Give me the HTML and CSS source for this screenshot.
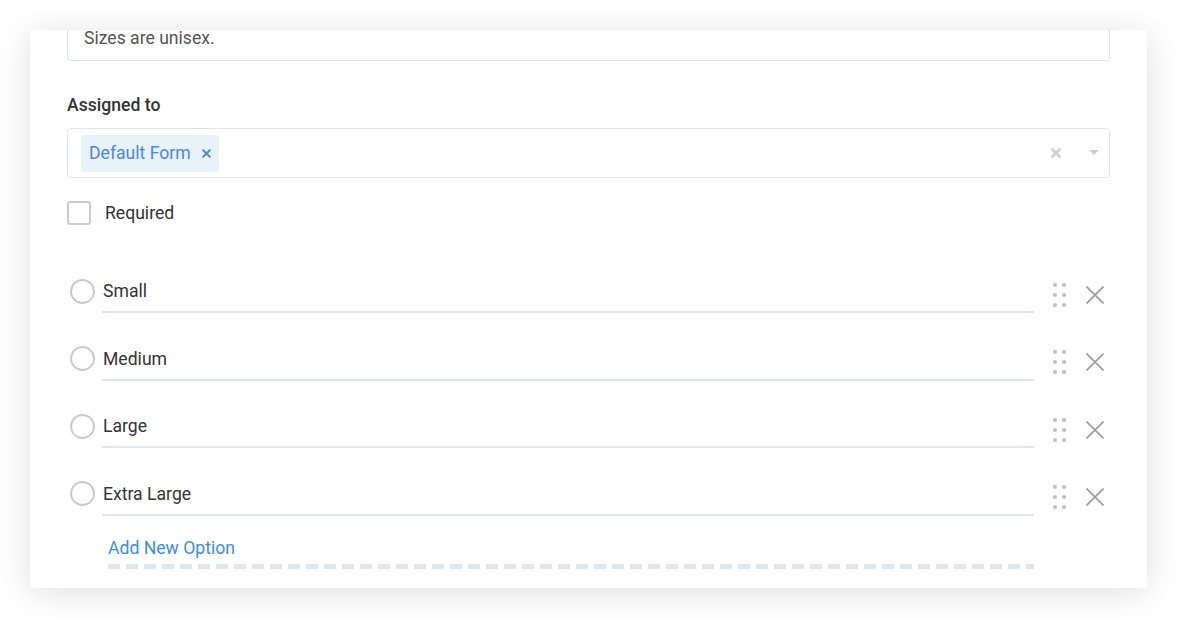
FILE: index.html
```html
<!DOCTYPE html>
<html lang="en">
<head>
<meta charset="utf-8">
<title>Field options</title>
<link rel="stylesheet" href="styles.css">
</head>
<body>
<div class="page">
  <div class="card">
    <div class="card-inner">
      <div class="textarea">Sizes are unisex.</div>

      <div class="label">Assigned to</div>
      <div class="select">
        <span class="tag">Default Form
          <svg class="tag-x" width="9" height="9" viewBox="0 0 9 9"><path d="M1.2 1.2 L7.8 7.8 M7.8 1.2 L1.2 7.8" stroke="#4a89dc" stroke-width="2" stroke-linecap="round"/></svg>
        </span>
        <span class="spacer"></span>
        <svg class="clear" width="12" height="12" viewBox="0 0 12 12"><path d="M1.5 1.5 L10.5 10.5 M10.5 1.5 L1.5 10.5" stroke="#cfcfcf" stroke-width="2.6"/></svg>
        <svg class="caret" width="10" height="5" viewBox="0 0 10 5"><path d="M0 0 H10 L5 5 Z" fill="#cfcfcf"/></svg>
      </div>

      <div class="check-row">
        <span class="checkbox"></span>
        <span class="check-label">Required</span>
      </div>

      <div class="options">
        <div class="option">
          <span class="radio"></span>
          <div class="opt-input">Small</div>
          <div class="opt-tools">
            <svg class="handle" width="14" height="24" viewBox="0 0 14 24"><circle cx="3" cy="2" r="2.1"/><circle cx="12" cy="2" r="2.1"/><circle cx="3" cy="12" r="2.1"/><circle cx="12" cy="12" r="2.1"/><circle cx="3" cy="22" r="2.1"/><circle cx="12" cy="22" r="2.1"/></svg>
            <svg class="remove" width="18" height="18" viewBox="0 0 18 18"><path d="M0.5 0.5 L17.5 17.5 M17.5 0.5 L0.5 17.5" stroke="#9a9a9a" stroke-width="1.6"/></svg>
          </div>
        </div>
        <div class="option">
          <span class="radio"></span>
          <div class="opt-input">Medium</div>
          <div class="opt-tools">
            <svg class="handle" width="14" height="24" viewBox="0 0 14 24"><circle cx="3" cy="2" r="2.1"/><circle cx="12" cy="2" r="2.1"/><circle cx="3" cy="12" r="2.1"/><circle cx="12" cy="12" r="2.1"/><circle cx="3" cy="22" r="2.1"/><circle cx="12" cy="22" r="2.1"/></svg>
            <svg class="remove" width="18" height="18" viewBox="0 0 18 18"><path d="M0.5 0.5 L17.5 17.5 M17.5 0.5 L0.5 17.5" stroke="#9a9a9a" stroke-width="1.6"/></svg>
          </div>
        </div>
        <div class="option">
          <span class="radio"></span>
          <div class="opt-input">Large</div>
          <div class="opt-tools">
            <svg class="handle" width="14" height="24" viewBox="0 0 14 24"><circle cx="3" cy="2" r="2.1"/><circle cx="12" cy="2" r="2.1"/><circle cx="3" cy="12" r="2.1"/><circle cx="12" cy="12" r="2.1"/><circle cx="3" cy="22" r="2.1"/><circle cx="12" cy="22" r="2.1"/></svg>
            <svg class="remove" width="18" height="18" viewBox="0 0 18 18"><path d="M0.5 0.5 L17.5 17.5 M17.5 0.5 L0.5 17.5" stroke="#9a9a9a" stroke-width="1.6"/></svg>
          </div>
        </div>
        <div class="option">
          <span class="radio"></span>
          <div class="opt-input">Extra Large</div>
          <div class="opt-tools">
            <svg class="handle" width="14" height="24" viewBox="0 0 14 24"><circle cx="3" cy="2" r="2.1"/><circle cx="12" cy="2" r="2.1"/><circle cx="3" cy="12" r="2.1"/><circle cx="12" cy="12" r="2.1"/><circle cx="3" cy="22" r="2.1"/><circle cx="12" cy="22" r="2.1"/></svg>
            <svg class="remove" width="18" height="18" viewBox="0 0 18 18"><path d="M0.5 0.5 L17.5 17.5 M17.5 0.5 L0.5 17.5" stroke="#9a9a9a" stroke-width="1.6"/></svg>
          </div>
        </div>
      </div>

      <div class="add-option">
        <div class="add-link">Add New Option</div>
        <div class="dashes"></div>
      </div>
    </div>
  </div>
</div>
</body>
</html>
```

FILE: styles.css
```css
* { box-sizing: border-box; }

html, body {
  margin: 0;
  padding: 0;
  background: #ffffff;
  font-family: Roboto, "Liberation Sans", Arial, sans-serif;
  font-size: 17.6px;
  color: #333333;
}

.page {
  padding: 30px 30px 31px 30px;
  height: 619px;
}

.card {
  height: 558px;
  background: #ffffff;
  box-shadow: 0 4px 32px rgba(0, 0, 0, 0.13);
}

.card-inner {
  padding: 0 37px;
}

.textarea {
  height: 31px;
  border: 1px solid #dfe5ec;
  border-top: none;
  border-radius: 0 0 4px 4px;
  padding: 0 16px;
  line-height: 16px;
  color: #555555;
}

.label {
  margin-top: 34px;
  line-height: 20px;
  font-weight: 500;
  color: #333333;
}

.select {
  margin-top: 13px;
  height: 50px;
  border: 1px solid #dfe5ec;
  border-radius: 4px;
  display: flex;
  align-items: center;
  padding: 0 10px 0 13px;
}

.tag {
  display: flex;
  align-items: center;
  height: 37px;
  width: 138px;
  padding: 0 0 0 8px;
  background: #e9f1fb;
  border-radius: 3px;
  color: #4a89dc;
  line-height: 20px;
}

.tag-x {
  margin-left: 11px;
}

.spacer {
  flex: 1;
}

.clear {
  margin-right: 27px;
}

.caret {
  margin-bottom: 2px;
}

.check-row {
  margin-top: 23px;
  display: flex;
  align-items: center;
}

.checkbox {
  width: 24px;
  height: 24px;
  border: 2px solid #cbcbcb;
  border-radius: 3px;
}

.check-label {
  margin-left: 14px;
  line-height: 20px;
  color: #333333;
}

.options {
  margin-top: 46px;
  display: flex;
  flex-direction: column;
  gap: 25.5px;
}

.option {
  display: flex;
  align-items: center;
  height: 42px;
}

.radio {
  width: 25px;
  height: 25px;
  border: 2px solid #cbcbcb;
  border-radius: 50%;
  margin-left: 3px;
  margin-bottom: 2px;
  flex: none;
}

.opt-input {
  margin-left: 7px;
  flex: 1;
  height: 42px;
  padding: 10px 0 0 1px;
  line-height: 20px;
  border-bottom: 2px solid #e0e6ed;
  color: #333333;
}

.opt-tools {
  display: flex;
  align-items: center;
  margin-left: 18px;
  margin-right: 6px;
  margin-top: 5px;
}

.handle {
  fill: #c2c2c2;
  display: block;
}

.remove {
  display: block;
  margin-left: 20px;
}

.add-option {
  margin: 22px 76px 0 41px;
}

.add-link {
  line-height: 20px;
  color: #3b8de4;
}

.dashes {
  margin-top: 6px;
  height: 5px;
  background: repeating-linear-gradient(to right, #e0e6ed 0, #e0e6ed 12px, transparent 12px, transparent 18px);
}
```
